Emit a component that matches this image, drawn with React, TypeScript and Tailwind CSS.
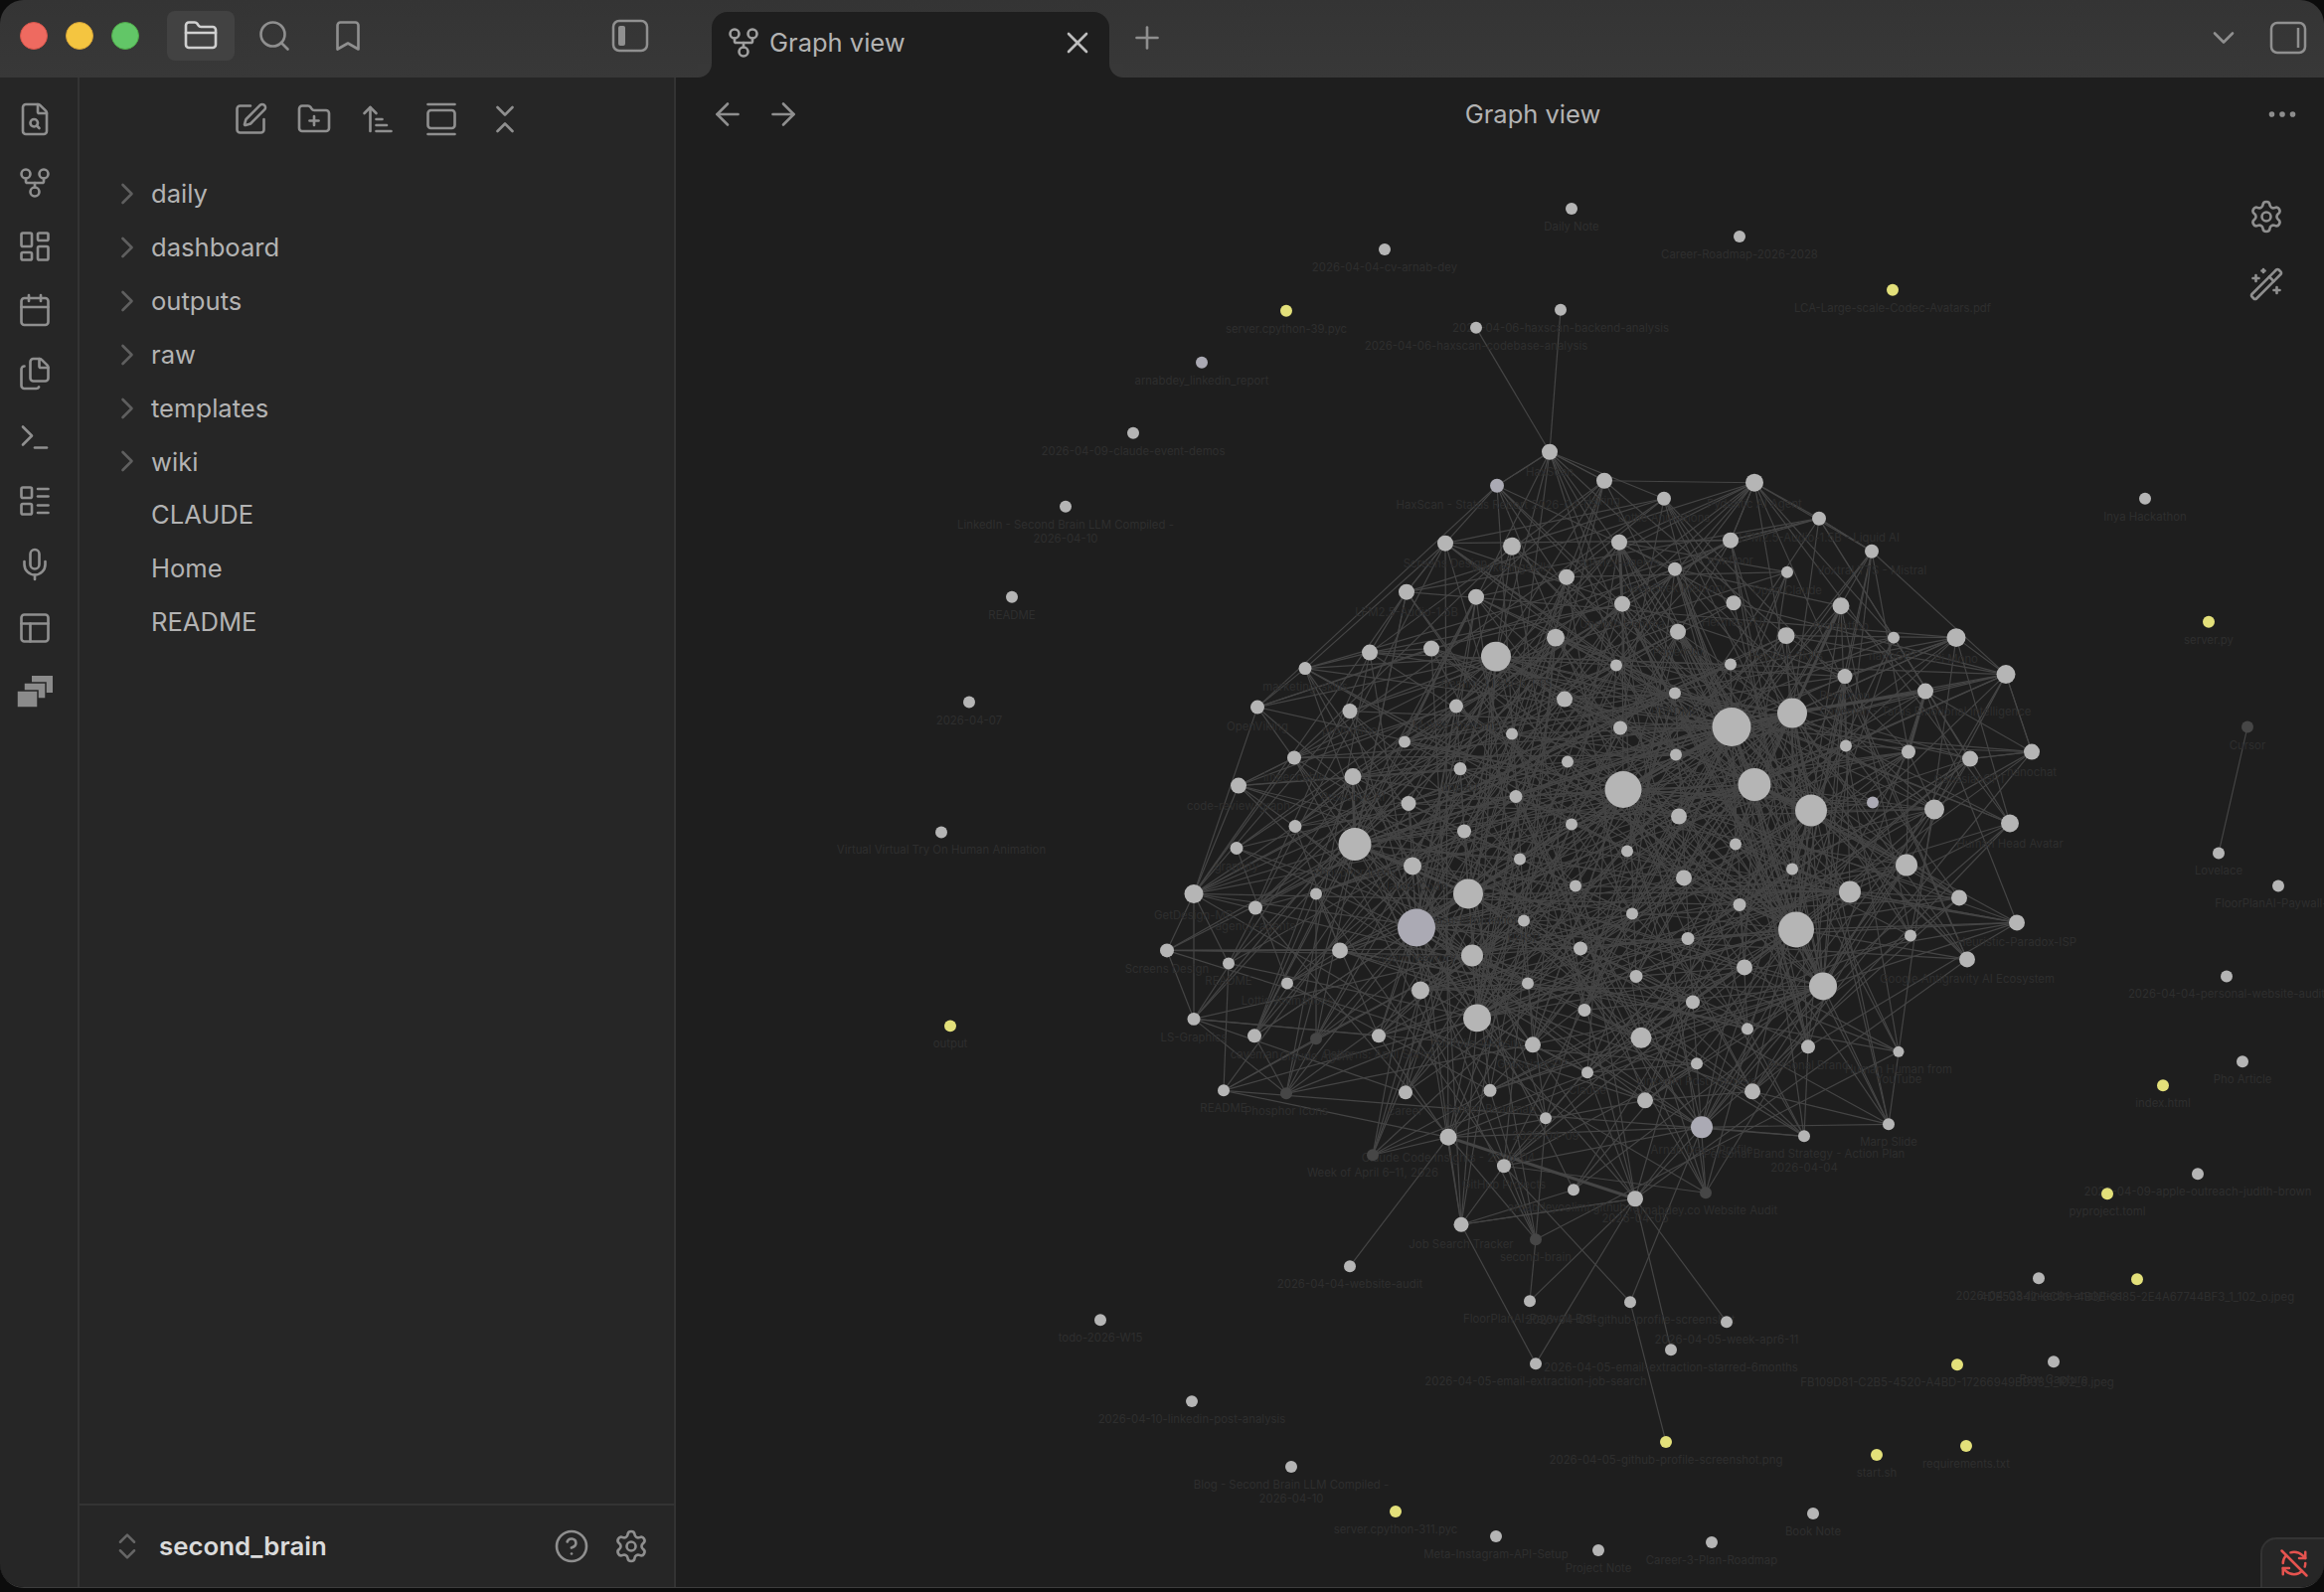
import React, { useMemo } from "react";
import {
  ArrowLeft, ArrowRight, ArrowUpNarrowWide, Bookmark, Calendar, ChevronDown, ChevronRight, ChevronsDownUp, ChevronsUpDown,
  CircleHelp, Ellipsis, FileSearch, Files, FolderClosed, FolderPlus, GalleryVertical, GitFork, LayoutDashboard, LayoutList,
  Mic, PanelsTopLeft, Plus, RefreshCwOff, Search, Settings, SquarePen, Terminal, WandSparkles, X,
} from "lucide-react";

type N = [number, number, number, string?, string?];
const G = "#b5b5b5", P = "#abaab4", Y = "#e3e07a", D = "#464646";

const cluster: N[] = [
  [1559,455,8,"HaxScan"],[1506,489,7,"HaxScan - Status Report 2026-04-05",P],[1454,547,8,"Screens Design"],[1521,550,9,"marketingskills"],
  [1576,581,8],[1415,596,8,"LFM2.5-Audio-1.5B"],[1485,601,8],[1565,642,9],[1378,657,8],[1440,653,8],[1505,661,15,"Gemini 3.1 Flash TTS"],
  [1313,673,6.5,"marketing-skills"],[1265,712,7,"OpenViking"],[1358,716,7.5,"promptfoo"],[1465,711,7,"Mobile Anatomy"],[1574,704,8],[1413,747,6],[1521,739,6],
  [1302,763,7,"impeccable"],[1246,791,8,"code-review-graph"],[1361,782,8.5,"Proactive AI"],[1469,774,6.5,"Impact"],[1577,767,6],[1417,809,7.5],
  [1525,802,6.5],[1303,832,6.5],[1244,854,6.5,"graphify"],[1363,850,16.5,"Phosphor Icons"],[1473,837,7],[1581,830,6],[1421,872,9,"Claude Code"],[1529,865,6],
  [1201,900,9.5,"GetDesign-MD"],[1324,900,6],[1477,900,15,"release-information"],[1585,892,6],[1263,914,7,"agency-agents"],[1425,934,19,"Agent Memory",P],
  [1533,927,6,"PPISP"],[1174,957,7,"Screens Design"],[1348,957,8],[1236,970,6,"README"],[1481,962,11],[1590,955,7],[1295,990,6,"Lottie Animations"],
  [1429,997,9],[1537,990,6],[1201,1026,6.5,"LS-Graphics"],[1486,1025,14,"Portfolio-Website"],[1594,1017,6.5],[1262,1043,7,"caveman"],[1324,1046,6,"Claude Agent",D],
  [1387,1043,7,"Patterns: April Sprint"],[1542,1052,8,"GaussianGPT"],[1231,1098,6,"README"],[1294,1101,6,"Phosphor Icons",D],[1414,1100,7,"career"],
  [1499,1098,6.5,"Career-Roadmap"],[1597,1080,6,"Claude"],[1555,1126,6,"2026-04-09"],[1457,1145,8.5,"Claude Code Insights - 2026-04"],
  [1614,484,8,"Hiring"],[1765,486,9,"Pydantic AI Agent"],[1674,502,7,"Lottie Animations"],[1830,522,7,"LFM2.5-Audio-1.5B - Liquid AI"],[1629,546,8,"agency-agents"],
  [1741,544,8,"romfloor"],[1883,555,7,"Voxtral TTS - Mistral"],[1685,573,7,"DeepSeek Memory"],[1798,576,6,"Open Claude"],[1632,608,8,"Unsloth Gemma"],
  [1744,607,7.5,"Hermes TUI"],[1852,610,8.5,"Promptfoo"],[1688,636,8,"Paperclip"],[1797,640,8.5,"HeyGen Skills"],[1905,642,6,"nanoGPT"],[1968,642,9.5,"Pi Mono"],
  [1626,670,6],[1741,669,6],[1856,681,7.5,"Remotion"],[2018,679,9.5],[1685,698,6,"README"],[1937,696,8,"Caveman - Tarus Emotional Intelligence"],[1803,718,15],
  [1742,732,19.5],[1630,733,7],[1857,751,6],[1920,757,7],[1982,764,8,"GaussianGPT"],[2044,757,8,"nanochat"],[1686,760,6],[1633,795,18.5],[1765,790,16.5],
  [1822,816,16],[1689,822,8],[1884,808,6,undefined,P],[1946,815,10],[2022,829,9,"Human Head Avatar"],[1746,850,6],[1637,857,6],[1694,884,8],[1803,875,6],
  [1750,911,6.5],[1861,898,11],[1918,871,11],[1971,904,8],[2029,929,8,"Heuristic-Paradox-ISP"],[1807,936,18],[1922,942,6],[1979,966,8,"Google Antigravity AI Ecosystem"],
  [1698,945,6.5],[1642,920,6],[1755,974,8],[1834,993,14],[1646,983,6.5],[1703,1009,7],[1758,1036,6],[1651,1045,10.5],[1819,1054,7,"Personal Brand"],
  [1910,1059,5.5,"Human Human from"],[1707,1071,6,"LinkedIn Post Analysis"],[1763,1099,8],[1655,1108,8],[1900,1132,6,"Marp Slide"],[1815,1144,6,"Personal Brand Strategy - Action Plan"],
  [1712,1135,11,"Arnab Dey - Profile",P],[1513,1174,7,"GitHub Projects"],[1583,1198,6,"arnabdeyoolimi.github.io"],[1645,1207,8,"2026-04-05"],[1716,1201,6,"arnabdey.co Website Audit",D],
  [1470,1233,7.5,"Job Search Tracker"],[1545,1248,6,"second-brain",D],[1381,1163,6,"Week of April 6–11, 2026",D],
];

const outer: N[] = [
  [1581,210,6,"Daily Note"],[1750,238,6,"Career-Roadmap-2026-2028"],[1393,251,6,"2026-04-04-cv-arnab-dey"],[1904,292,6,"LCA-Large-scale-Codec-Avatars.pdf",Y],
  [1294,313,6,"server.cpython-39.pyc",Y],[1570,312,6,"2026-04-06-haxscan-backend-analysis"],[1485,330,6,"2026-04-06-haxscan-codebase-analysis"],[1209,365,6,"arnabdey_linkedin_report",P],
  [1140,436,6,"2026-04-09-claude-event-demos"],[1072,510,6,"LinkedIn - Second Brain LLM Compiled -"],[1018,601,6,"README"],[975,707,6,"2026-04-07"],
  [947,838,6,"Virtual Virtual Try On Human Animation"],[956,1033,6,"output",Y],[2158,502,6,"Inya Hackathon"],[2222,626,6,"server.py",Y],[2261,732,6,"Cursor",D],
  [2232,859,6,"Lovelace"],[2292,892,6,"FloorPlanAI-Paywall-Bo"],[2240,983,6,"2026-04-04-personal-website-audit"],[2256,1069,6,"Pho Article"],[2176,1093,6,"index.html",Y],
  [2211,1182,6,"2026-04-09-apple-outreach-judith-brown"],[2120,1202,6,"pyproject.toml",Y],[2051,1287,6,"2026-04-03-linkedin-analytics"],[2150,1288,6,"4DE53842-8C89-4B3E-9185-2E4A67744BF3_1_102_o.jpeg",Y],
  [1969,1374,6,"FB109D81-C2B5-4520-A4BD-17266949BD33_1_102_o.jpeg",Y],[2066,1371,6,"Raw Capture"],[1888,1465,6,"start.sh",Y],[1978,1456,6,"requirements.txt",Y],
  [1676,1452,6,"2026-04-05-github-profile-screenshot.png",Y],[1358,1275,6,"2026-04-04-website-audit"],[1539,1310,6,"FloorPlanAI-Paywall-Bolt"],[1640,1311,6,"2026-04-05-github-profile-screenshot"],
  [1737,1331,6,"2026-04-05-week-apr6-11"],[1681,1359,6,"2026-04-05-email-extraction-starred-6months"],[1545,1373,6,"2026-04-05-email-extraction-job-search"],
  [1107,1329,6,"todo-2026-W15"],[1199,1411,6,"2026-04-10-linkedin-post-analysis"],[1299,1477,6,"Blog - Second Brain LLM Compiled -"],[1404,1522,6,"server.cpython-311.pyc",Y],
  [1505,1547,6,"Meta-Instagram-API-Setup"],[1608,1561,6,"Project Note"],[1722,1553,6,"Career-3-Plan-Roadmap"],[1824,1524,6,"Book Note"],
];

const extraLabels: [number, number, string][] = [[1072,546,"2026-04-10"],[1299,1513,"2026-04-10"],[1910,1091,"YouTube"],[1815,1180,"2026-04-04"]];

const fixedEdges: number[][] = [
  [1559,455,1485,330],[1559,455,1570,312],[2261,732,2232,859],[1358,1275,1457,1145],[1381,1163,1457,1145],[1470,1233,1545,1373],[1545,1373,1645,1207],
  [1539,1310,1645,1207],[1539,1310,1545,1248],[1545,1248,1555,1126],[1640,1311,1513,1174],[1640,1311,1712,1135],[1676,1452,1640,1311],[1737,1331,1645,1207],
  [1681,1359,1645,1207],[1470,1233,1645,1207],[1470,1233,1457,1145],[1470,1233,1513,1174],[1470,1233,1583,1198],[1645,1207,1712,1135],[1815,1144,1712,1135],[1900,1132,1834,993],
  [1614,484,1765,486],[1765,486,1741,544],[1765,486,1883,555],[1830,522,1883,555],[1830,522,1741,544],[1883,555,2018,679],[1968,642,2018,679],[2018,679,2044,757],[2018,679,1937,696],
  [2044,757,1982,764],[2044,757,1857,751],[1559,455,1506,489],[1506,489,1454,547],[1454,547,1415,596],[1415,596,1378,657],[1378,657,1313,673],[1313,673,1265,712],[1265,712,1201,900],
  [1201,900,1174,957],[1174,957,1201,1026],[1201,1026,1294,1101],[1294,1101,1262,1043],[1231,1098,1236,970],[1231,1098,1324,1046],[1559,455,1614,484],[1559,455,1674,502],
  [1201,900,1246,791],[1246,791,1302,763],[1201,1026,1201,900],[1201,1026,1414,1100],
];
const thickEdges: number[][] = [[1803,718,1937,696],[1803,718,1852,610],[1742,732,1803,718],[1457,1145,1645,1207],[1425,934,1477,900],[1363,850,1477,900],[1633,795,1742,732],[1765,790,1822,816],[1937,696,1920,757],[1361,782,1363,850],[1629,546,1632,608]];

function useEdges() {
  return useMemo(() => {
    let s = 20260410;
    const rnd = () => {
      s |= 0; s = (s + 0x6d2b79f5) | 0;
      let t = Math.imul(s ^ (s >>> 15), 1 | s);
      t = (t + Math.imul(t ^ (t >>> 7), 61 | t)) ^ t;
      return ((t ^ (t >>> 14)) >>> 0) / 4294967296;
    };
    const seen = new Set<string>();
    const edges: number[][] = [];
    cluster.forEach((a, i) => {
      const deg = a[2] >= 14 ? 22 : a[2] >= 10 ? 10 : a[2] >= 8 ? 6 : 4;
      const cand = cluster.map((b, j) => {
        const d = Math.hypot(a[0] - b[0], a[1] - b[1]);
        return { j, d, w: j === i || d > 600 ? 0 : Math.pow(b[2], 1.6) / (1 + d / 320) };
      }).filter((c) => c.w > 0);
      const total = cand.reduce((sum, c) => sum + c.w, 0);
      for (let k = 0; k < deg; k++) {
        let r = rnd() * total;
        let pick = cand[0];
        for (const c of cand) { r -= c.w; if (r <= 0) { pick = c; break; } }
        const key = i < pick.j ? `${i}-${pick.j}` : `${pick.j}-${i}`;
        if (seen.has(key)) continue;
        seen.add(key);
        const b = cluster[pick.j];
        edges.push([a[0], a[1], b[0], b[1]]);
      }
    });
    return edges;
  }, []);
}

function GraphCanvas() {
  const edges = useEdges();
  const all = [...cluster, ...outer];
  return (
    <svg className="absolute inset-0 h-full w-full" viewBox="680 78 1658 1520" preserveAspectRatio="none">
      <g stroke="#454545" strokeWidth="1.2">
        {[...edges, ...fixedEdges].map((e, i) => <line key={i} x1={e[0]} y1={e[1]} x2={e[2]} y2={e[3]} />)}
      </g>
      <g stroke="#454545" strokeWidth="3">
        {thickEdges.map((e, i) => <line key={i} x1={e[0]} y1={e[1]} x2={e[2]} y2={e[3]} />)}
      </g>
      <g fill="#2e2e2e" fontFamily="Inter, sans-serif" fontSize="11.4" textAnchor="middle">
        {all.filter((n) => n[3]).map((n, i) => <text key={i} x={n[0]} y={n[1] + n[2] + 16}>{n[3]}</text>)}
        {extraLabels.map((l, i) => <text key={i} x={l[0]} y={l[1]}>{l[2]}</text>)}
      </g>
      {all.map((n, i) => <circle key={i} cx={n[0]} cy={n[1]} r={n[2]} fill={n[4] ?? G} />)}
    </svg>
  );
}

const ic = { size: 36, strokeWidth: 1.75, absoluteStrokeWidth: false };

function Stack() {
  return (
    <svg width="38" height="34" viewBox="0 0 38 34" fill="#8b8b8b">
      <rect x="16" y="1" width="21" height="17" />
      <rect x="8" y="8" width="22" height="16" stroke="#262626" strokeWidth="1.5" />
      <rect x="1" y="16" width="21" height="17" stroke="#262626" strokeWidth="1.5" />
    </svg>
  );
}

function ToggleLeft() {
  return (
    <svg width="38" height="34" viewBox="0 0 38 34" fill="none" stroke="#909090" strokeWidth="2.5">
      <rect x="2" y="2" width="34" height="30" rx="6" />
      <rect x="7" y="7" width="7" height="20" rx="2" fill="#909090" stroke="none" />
    </svg>
  );
}

function ToggleRight() {
  return (
    <svg width="38" height="34" viewBox="0 0 38 34" fill="none" stroke="#909090" strokeWidth="2.5">
      <rect x="2" y="2" width="34" height="30" rx="6" />
      <line x1="29" y1="7" x2="29" y2="27" />
    </svg>
  );
}

const folders = ["daily", "dashboard", "outputs", "raw", "templates", "wiki"];
const files = ["CLAUDE", "Home", "README"];

export default function App() {
  return (
    <div className="h-[1602px] w-[2338px] overflow-hidden bg-[#0c0c0c] font-['Inter',sans-serif]">
      <div className="relative flex h-[1598px] w-full flex-col overflow-hidden rounded-[24px] border-b border-[#3d3d3d]">
        {/* title bar */}
        <div className="flex h-[78px] shrink-0 items-start bg-linear-to-b from-[#343434] to-[#383838]">
          <div className="flex h-[72px] w-[716px] shrink-0 items-center pl-[20px]">
            <div className="flex gap-[18px]">
              <span className="size-[28px] rounded-full border border-[#d4544a] bg-[#ee6a60]" />
              <span className="size-[28px] rounded-full border border-[#d6a438] bg-[#f4c540]" />
              <span className="size-[28px] rounded-full border border-[#4fa948] bg-[#62c667]" />
            </div>
            <div className="ml-[28px] flex items-center text-[#8f8f8f]">
              <div className="flex h-[50px] w-[68px] items-center justify-center rounded-[8px] bg-[#424242] text-[#d0d0d0]">
                <FolderClosed {...ic} />
              </div>
              <div className="flex w-[80px] justify-center"><Search {...ic} /></div>
              <div className="flex w-[68px] justify-center"><Bookmark {...ic} /></div>
            </div>
            <div className="ml-[231px]"><ToggleLeft /></div>
          </div>
          <div className="relative mt-[12px] flex h-[66px] w-[400px] shrink-0 items-center rounded-t-[16px] bg-[#1e1e1e] pb-[4px] pl-[14px] text-[#b3b3b3]">
            <div className="absolute -left-[14px] bottom-0 size-[14px] bg-[#1e1e1e]"><div className="size-full rounded-br-[14px] bg-[#383838]" /></div>
            <div className="absolute -right-[14px] bottom-0 size-[14px] bg-[#1e1e1e]"><div className="size-full rounded-bl-[14px] bg-[#383838]" /></div>
            <GitFork size={36} strokeWidth={1.75} className="text-[#a0a0a0]" />
            <span className="ml-[8px] text-[25.5px] leading-none">Graph view</span>
            <X size={36} strokeWidth={1.75} className="ml-auto mr-[14px] text-[#bdbdbd]" />
          </div>
          <div className="ml-[20px] flex h-[78px] items-center pb-[2px]"><Plus {...ic} className="text-[#8f8f8f]" /></div>
          <div className="ml-auto flex h-[78px] items-center pb-[2px] pr-[17px]">
            <ChevronDown {...ic} className="text-[#8f8f8f]" />
            <div className="ml-[28px]"><ToggleRight /></div>
          </div>
        </div>

        {/* body */}
        <div className="flex min-h-0 flex-1">
          {/* ribbon */}
          <div className="flex w-[80px] shrink-0 flex-col items-center gap-[28px] border-r-2 border-[#333333] bg-[#262626] pr-[9px] pt-[24px] text-[#8f8f8f]">
            <FileSearch {...ic} />
            <GitFork {...ic} />
            <LayoutDashboard {...ic} />
            <Calendar {...ic} />
            <Files {...ic} />
            <Terminal {...ic} />
            <LayoutList {...ic} />
            <Mic {...ic} />
            <PanelsTopLeft {...ic} />
            <div className="flex h-[36px] items-center"><Stack /></div>
          </div>

          {/* file explorer */}
          <div className="flex w-[600px] shrink-0 flex-col border-r-2 border-[#333333] bg-[#262626]">
            <div className="flex shrink-0 justify-center gap-[28px] pl-[2px] pt-[24px] text-[#8f8f8f]">
              <SquarePen {...ic} />
              <FolderPlus {...ic} />
              <ArrowUpNarrowWide {...ic} />
              <GalleryVertical {...ic} />
              <ChevronsDownUp {...ic} />
            </div>
            <div className="mt-[30px] flex-1 text-[25.6px] text-[#b3b3b3]">
              {folders.map((f) => (
                <div key={f} className="flex h-[53.9px] items-center pl-[30px]">
                  <ChevronRight {...ic} className="text-[#5f5f5f]" />
                  <span className="ml-[6px] leading-none">{f}</span>
                </div>
              ))}
              {files.map((f) => (
                <div key={f} className="flex h-[53.9px] items-center pl-[72px]">
                  <span className="leading-none">{f}</span>
                </div>
              ))}
            </div>
            <div className="flex h-[84px] shrink-0 items-center border-t-2 border-[#333333] pr-[25px]">
              <ChevronsUpDown size={34} strokeWidth={1.75} className="ml-[31px] text-[#666666]" />
              <span className="ml-[15px] text-[25.8px] font-semibold leading-none text-[#dadada]">second_brain</span>
              <CircleHelp {...ic} className="ml-auto text-[#8f8f8f]" />
              <Settings {...ic} className="ml-[24px] text-[#8f8f8f]" />
            </div>
          </div>

          {/* graph pane */}
          <div className="relative min-w-0 flex-1 bg-[#1e1e1e]">
            <GraphCanvas />
            <div className="relative flex h-[74px] items-center pl-[34px] pr-[24px] text-[#8f8f8f]">
              <ArrowLeft {...ic} />
              <ArrowRight {...ic} className="ml-[20px]" />
              <span className="flex-1 text-center text-[25.5px] leading-none text-[#b3b3b3]">Graph view</span>
              <Ellipsis {...ic} />
            </div>
            <div className="absolute right-[40px] top-[122px] flex flex-col gap-[32px] text-[#8f8f8f]">
              <Settings {...ic} />
              <WandSparkles {...ic} />
            </div>
            <div className="absolute bottom-0 right-0 flex h-[50px] w-[64px] items-center justify-center rounded-tl-[16px] border-l-2 border-t-2 border-[#333333] bg-[#262626] pl-[2px] text-[#e5534f]">
              <RefreshCwOff size={30} strokeWidth={2} />
            </div>
          </div>
        </div>
      </div>
    </div>
  );
}
